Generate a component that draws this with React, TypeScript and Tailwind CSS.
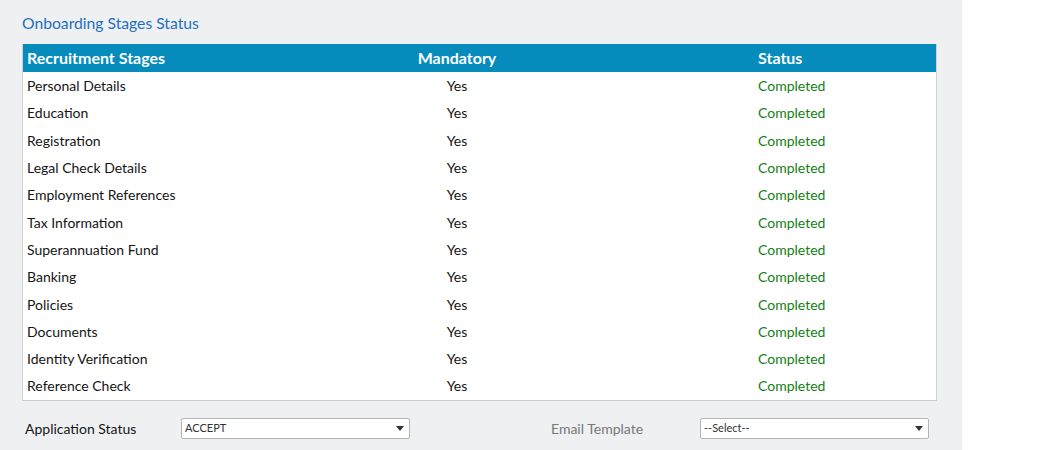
import React from "react";

const stages = [
  "Personal Details",
  "Education",
  "Registration",
  "Legal Check Details",
  "Employment References",
  "Tax Information",
  "Superannuation Fund",
  "Banking",
  "Policies",
  "Documents",
  "Identity Verification",
  "Reference Check",
];

function Caret() {
  return (
    <svg width="8" height="5" viewBox="0 0 8 5" className="shrink-0">
      <path d="M0 0 L8 0 L4 5 Z" fill="#333" />
    </svg>
  );
}

export default function App() {
  return (
    <div className="w-[1050px] h-[450px] bg-white flex overflow-hidden" style={{ fontFamily: "Lato, 'Open Sans', sans-serif" }}>
      <div className="w-[962px] h-full bg-[#eff0f2] pl-[22px] pr-[25px] pt-[13px]">
        <div className="text-[15.7px] leading-[20px] text-[#1f6fbf]">Onboarding Stages Status</div>
        <div className="mt-[11px] border border-[#d0d0d0] border-t-0 bg-white">
          <div className="grid grid-cols-[388px_92px_1fr] h-[28px] items-center bg-[#058bbc] text-white font-bold text-[16px]">
            <div className="pl-[4px]">Recruitment Stages</div>
            <div className="text-center">Mandatory</div>
            <div className="pl-[255px]">Status</div>
          </div>
          {stages.map((s) => (
            <div key={s} className="grid grid-cols-[388px_92px_1fr] h-[27.3px] items-center text-[14px] text-[#151515]">
              <div className="pl-[4px]">{s}</div>
              <div className="text-center">Yes</div>
              <div className="pl-[255px] text-[#127f12]">Completed</div>
            </div>
          ))}
        </div>
        <div className="flex items-center mt-[17px] h-[22px]">
          <div className="w-[159px] pl-[3px] text-[14px] text-[#151515]">Application Status</div>
          <div className="w-[229px] h-[21px] border border-[#b5b5b5] rounded-[2px] bg-white flex items-center justify-between pl-[3px] pr-[5px] text-[11px] text-[#333]">
            <span>ACCEPT</span>
            <Caret />
          </div>
          <div className="w-[290px] pl-[141px] text-[14px] text-[#777]">Email Template</div>
          <div className="w-[229px] h-[21px] border border-[#b5b5b5] rounded-[2px] bg-white flex items-center justify-between pl-[3px] pr-[5px] text-[11px] text-[#333]">
            <span>--Select--</span>
            <Caret />
          </div>
        </div>
      </div>
    </div>
  );
}
